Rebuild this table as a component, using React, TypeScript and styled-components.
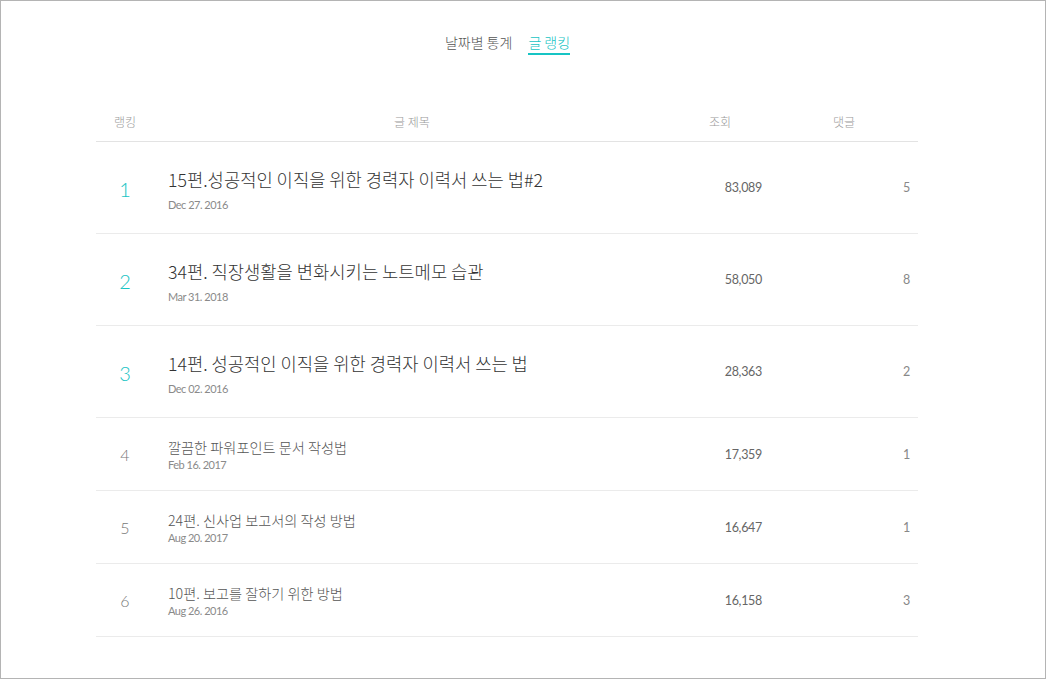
import styled, { createGlobalStyle } from 'styled-components';

const GlobalStyle = createGlobalStyle`
  html, body {
    margin: 0;
    padding: 0;
    background: #fff;
  }
  body {
    font-family: Lato, "Noto Sans CJK KR", sans-serif;
  }
`;

const Frame = styled.div`
  box-sizing: border-box;
  width: 1046px;
  height: 679px;
  border: 1px solid #b4b4b4;
  overflow: hidden;
`;

const Tabs = styled.div`
  display: flex;
  justify-content: center;
  gap: 16px;
  padding-top: 31px;
  padding-right: 31px;
`;

const Tab = styled.div<{ active?: boolean }>`
  font-family: "Noto Sans CJK KR", sans-serif;
  font-weight: 300;
  font-size: 14px;
  line-height: 20px;
  padding-bottom: 1px;
  color: ${({ active }) => (active ? '#17c4c4' : '#555')};
  border-bottom: 2px solid ${({ active }) => (active ? '#17c4c4' : 'transparent')};
  cursor: pointer;
`;

const Table = styled.div`
  width: 822px;
  margin: 46px 0 0 95px;
`;

const Row = styled.div<{ top?: boolean }>`
  display: grid;
  grid-template-columns: 58px 516px 100px 148px;
  align-items: center;
  height: ${({ top }) => (top ? '91px' : '72px')};
  border-bottom: 1px solid #ebebeb;
`;

const HeadRow = styled(Row)`
  height: 40px;
  border-bottom: 1px solid #e3e3e3;
`;

const HeadCell = styled.div`
  font-family: "Noto Sans CJK KR", sans-serif;
  font-weight: 300;
  font-size: 12px;
  color: #999;
  text-align: center;
`;

const Rank = styled.div<{ top?: boolean }>`
  text-align: center;
  font-weight: 300;
  font-size: ${({ top }) => (top ? '20px' : '16px')};
  color: ${({ top }) => (top ? '#17c4c4' : '#777')};
  padding-top: ${({ top }) => (top ? '3px' : '0')};
`;

const TitleCell = styled.div<{ top?: boolean }>`
  padding-left: 14px;
  display: flex;
  flex-direction: column;
  gap: ${({ top }) => (top ? '7px' : '1px')};
  padding-top: ${({ top }) => (top ? '3px' : '0')};
`;

const Title = styled.div<{ top?: boolean }>`
  font-family: "Noto Sans CJK KR", sans-serif;
  font-weight: 300;
  font-size: ${({ top }) => (top ? '17.7px' : '14.2px')};
  line-height: ${({ top }) => (top ? '24px' : '20px')};
  color: ${({ top }) => (top ? '#333' : '#555')};
`;

const DateText = styled.div`
  font-size: 11px;
  line-height: 14px;
  letter-spacing: -0.5px;
  color: #8a8a8a;
`;

const Num = styled.div<{ muted?: boolean }>`
  text-align: right;
  padding-right: 8px;
  font-size: 12.5px;
  letter-spacing: -0.3px;
  color: ${({ muted }) => (muted ? '#888' : '#666')};
`;

const rows = [
  { title: '15편.성공적인 이직을 위한 경력자 이력서 쓰는 법#2', date: 'Dec 27. 2016', views: '83,089', comments: 5 },
  { title: '34편. 직장생활을 변화시키는 노트메모 습관', date: 'Mar 31. 2018', views: '58,050', comments: 8 },
  { title: '14편. 성공적인 이직을 위한 경력자 이력서 쓰는 법', date: 'Dec 02. 2016', views: '28,363', comments: 2 },
  { title: '깔끔한 파워포인트 문서 작성법', date: 'Feb 16. 2017', views: '17,359', comments: 1 },
  { title: '24편. 신사업 보고서의 작성 방법', date: 'Aug 20. 2017', views: '16,647', comments: 1 },
  { title: '10편. 보고를 잘하기 위한 방법', date: 'Aug 26. 2016', views: '16,158', comments: 3 },
];

export default function App() {
  return (
    <>
      <GlobalStyle />
      <Frame>
        <Tabs>
          <Tab>날짜별 통계</Tab>
          <Tab active>글 랭킹</Tab>
        </Tabs>
        <Table>
          <HeadRow>
            <HeadCell>랭킹</HeadCell>
            <HeadCell>글 제목</HeadCell>
            <HeadCell>조회</HeadCell>
            <HeadCell>댓글</HeadCell>
          </HeadRow>
          {rows.map((r, i) => {
            const top = i < 3;
            return (
              <Row key={i} top={top}>
                <Rank top={top}>{i + 1}</Rank>
                <TitleCell top={top}>
                  <Title top={top}>{r.title}</Title>
                  <DateText>{r.date}</DateText>
                </TitleCell>
                <Num>{r.views}</Num>
                <Num muted>{r.comments}</Num>
              </Row>
            );
          })}
        </Table>
      </Frame>
    </>
  );
}
